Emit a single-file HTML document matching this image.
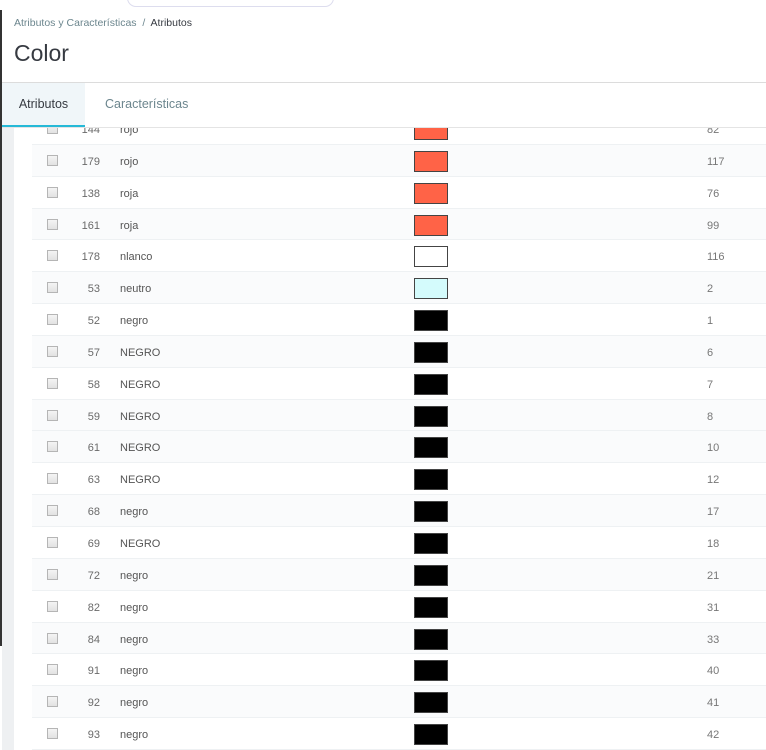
<!DOCTYPE html>
<html><head><meta charset="utf-8"><style>
*{margin:0;padding:0;box-sizing:border-box}
body{width:766px;height:750px;overflow:hidden;background:#fff;font-family:"Liberation Sans",sans-serif;position:relative;color:#363a41}
.ledge{position:absolute;left:0;top:10px;width:2px;height:636px;background:#333}
.strip{position:absolute;left:2px;top:128px;width:12px;height:622px;background:#eef0f2}
.rows{position:absolute;left:32px;top:113px;right:0}
.row{position:relative;height:31.85px;border-bottom:1px solid #eef1f3;font-size:11px;color:#555}
.row.s{background:#fafbfc}
.cb{position:absolute;left:15px;top:10px;width:11px;height:11px;border:1px solid #b5b5b5;background:linear-gradient(#f4f4f4,#e2e2e2)}
.id{position:absolute;left:40px;width:28px;text-align:right;top:11px;color:#6a6a6a}
.nm{position:absolute;left:88px;top:11px}
.sw{position:absolute;left:382px;top:6px;width:34px;height:21px;border:1px solid #444}
.ct{position:absolute;left:675px;top:11px;color:#777}
.head{position:absolute;left:0;top:0;width:766px;height:128px;background:#fff}
.inp{position:absolute;left:127px;top:-12px;width:207px;height:19px;border:1px solid #dde;border-radius:9px}
.bc{position:absolute;left:14px;top:17px;font-size:10.5px;color:#6c868e}
.bc b{font-weight:normal;color:#363a41}
h1{position:absolute;left:14px;top:40px;font-size:23px;font-weight:normal;color:#363a41}
.line{position:absolute;left:0;top:82px;width:766px;height:1px;background:#dcdcdc}
.tab{position:absolute;top:83px;height:45px;font-size:12.5px;line-height:42px}
.t1{left:2px;width:83px;background:#f0f6f9;border-bottom:3px solid #25b9d7;text-align:center;color:#363a41}
.t2{left:105px;color:#6c868e}
.line2{position:absolute;left:0;top:127px;width:766px;height:1px;background:#e4e4e4}
</style></head><body>
<div class="strip"></div>
<div class="rows">
<div class="row"><span class="cb"></span><span class="id">144</span><span class="nm">rojo</span><span class="sw" style="background:#ff6347"></span><span class="ct">82</span></div>
<div class="row s"><span class="cb"></span><span class="id">179</span><span class="nm">rojo</span><span class="sw" style="background:#ff6347"></span><span class="ct">117</span></div>
<div class="row"><span class="cb"></span><span class="id">138</span><span class="nm">roja</span><span class="sw" style="background:#ff6347"></span><span class="ct">76</span></div>
<div class="row s"><span class="cb"></span><span class="id">161</span><span class="nm">roja</span><span class="sw" style="background:#ff6347"></span><span class="ct">99</span></div>
<div class="row"><span class="cb"></span><span class="id">178</span><span class="nm">nlanco</span><span class="sw" style="background:#fff"></span><span class="ct">116</span></div>
<div class="row s"><span class="cb"></span><span class="id">53</span><span class="nm">neutro</span><span class="sw" style="background:#d4fbfc"></span><span class="ct">2</span></div>
<div class="row"><span class="cb"></span><span class="id">52</span><span class="nm">negro</span><span class="sw" style="background:#000"></span><span class="ct">1</span></div>
<div class="row s"><span class="cb"></span><span class="id">57</span><span class="nm">NEGRO</span><span class="sw" style="background:#000"></span><span class="ct">6</span></div>
<div class="row"><span class="cb"></span><span class="id">58</span><span class="nm">NEGRO</span><span class="sw" style="background:#000"></span><span class="ct">7</span></div>
<div class="row s"><span class="cb"></span><span class="id">59</span><span class="nm">NEGRO</span><span class="sw" style="background:#000"></span><span class="ct">8</span></div>
<div class="row s"><span class="cb"></span><span class="id">61</span><span class="nm">NEGRO</span><span class="sw" style="background:#000"></span><span class="ct">10</span></div>
<div class="row"><span class="cb"></span><span class="id">63</span><span class="nm">NEGRO</span><span class="sw" style="background:#000"></span><span class="ct">12</span></div>
<div class="row s"><span class="cb"></span><span class="id">68</span><span class="nm">negro</span><span class="sw" style="background:#000"></span><span class="ct">17</span></div>
<div class="row"><span class="cb"></span><span class="id">69</span><span class="nm">NEGRO</span><span class="sw" style="background:#000"></span><span class="ct">18</span></div>
<div class="row s"><span class="cb"></span><span class="id">72</span><span class="nm">negro</span><span class="sw" style="background:#000"></span><span class="ct">21</span></div>
<div class="row"><span class="cb"></span><span class="id">82</span><span class="nm">negro</span><span class="sw" style="background:#000"></span><span class="ct">31</span></div>
<div class="row s"><span class="cb"></span><span class="id">84</span><span class="nm">negro</span><span class="sw" style="background:#000"></span><span class="ct">33</span></div>
<div class="row"><span class="cb"></span><span class="id">91</span><span class="nm">negro</span><span class="sw" style="background:#000"></span><span class="ct">40</span></div>
<div class="row s"><span class="cb"></span><span class="id">92</span><span class="nm">negro</span><span class="sw" style="background:#000"></span><span class="ct">41</span></div>
<div class="row"><span class="cb"></span><span class="id">93</span><span class="nm">negro</span><span class="sw" style="background:#000"></span><span class="ct">42</span></div>
</div>
<div class="head">
<div class="inp"></div>
<div class="bc">Atributos y Características &nbsp;/&nbsp; <b>Atributos</b></div>
<h1>Color</h1>
<div class="line"></div>
<div class="tab t1">Atributos</div>
<div class="tab t2">Características</div>
<div class="line2"></div>
</div>
<div class="ledge"></div>
</body></html>
